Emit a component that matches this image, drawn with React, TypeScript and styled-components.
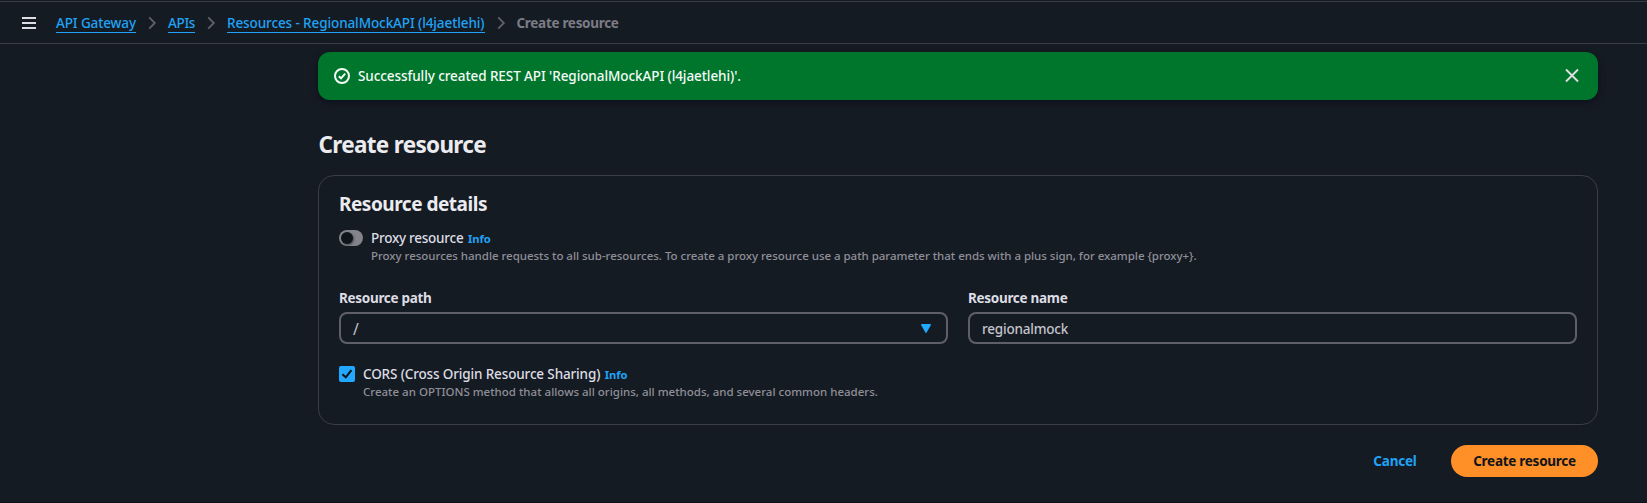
import React from 'react';
import styled, { createGlobalStyle } from 'styled-components';

const color = {
  bg: '#151b23',
  divider: '#3a3c46',
  border: '#5f5f69',
  link: '#20a3f6',
  heading: '#ebebf0',
  text: '#dddde3',
  input: '#c4c4cb',
  muted: '#8f8f98',
  success: '#00762d',
  primary: '#ff8f27',
};

const GlobalStyle = createGlobalStyle`
  * { box-sizing: border-box; }
  body {
    margin: 0;
    background: ${color.bg};
    color: ${color.text};
    font: 500 13.5px/20px "Noto Sans", "Open Sans", sans-serif;
    white-space: nowrap;
    overflow: hidden;
  }
`;

const Page = styled.div`
  height: 503px;
  padding-top: 1px;
  border-bottom: 1px solid #0e121a;
`;

const Header = styled.header`
  display: flex;
  align-items: flex-start;
  height: 43px;
  padding: 11px 22px 0;
  border-top: 1px solid ${color.divider};
  border-bottom: 1px solid ${color.divider};
`;

const MenuButton = styled.button`
  display: flex;
  flex-direction: column;
  gap: 3px;
  width: 14px;
  margin: 4px 20px 0 0;
  padding: 0;
  border: 0;
  background: none;
`;

const MenuBar = styled.span`
  height: 2px;
  background: ${color.text};
`;

const Breadcrumbs = styled.nav`
  display: flex;
  align-items: flex-start;
`;

const Crumb = styled.a<{ $width: number; $tracking: number }>`
  width: ${(p) => p.$width}px;
  height: 20px;
  color: ${color.link};
  border-bottom: 1px solid ${color.link};
  letter-spacing: ${(p) => p.$tracking}px;
`;

const CurrentCrumb = styled.span`
  color: #7c7c86;
  font-weight: 700;
  letter-spacing: -0.3px;
`;

const ChevronIcon = styled.svg`
  width: 16px;
  height: 16px;
  margin: 2px 8px 0;
  fill: none;
  stroke: #5f606a;
  stroke-width: 1.8;
`;

const Main = styled.main`
  width: 1280px;
  margin: 8px 0 0 318px;
`;

const Flashbar = styled.div`
  display: flex;
  align-items: center;
  gap: 8px;
  height: 48px;
  padding: 0 18px 0 16px;
  border-radius: 12px;
  background: ${color.success};
  color: #f5fbf7;
  letter-spacing: -0.08px;
  box-shadow: 0 3px 6px 1px rgba(0, 7, 22, 0.35);
`;

const FlashIcon = styled.svg`
  width: 16px;
  height: 16px;
  fill: none;
  stroke: #f5fbf7;
  stroke-width: 2;
`;

const DismissButton = styled.button`
  display: flex;
  margin-left: auto;
  padding: 0;
  border: 0;
  background: none;
`;

const CloseIcon = styled.svg`
  width: 16px;
  height: 16px;
  fill: none;
  stroke: ${color.text};
  stroke-width: 1.9;
`;

const PageTitle = styled.h1`
  margin: 30px 0 15px;
  padding-left: 0.5px;
  color: ${color.heading};
  font-size: 22.5px;
  font-weight: 700;
  line-height: 30px;
  letter-spacing: -0.68px;
`;

const Container = styled.section`
  height: 250px;
  padding: 16px 20px 24px;
  border: 1px solid ${color.divider};
  border-radius: 16px;
`;

const SectionTitle = styled.h2`
  margin: 0 0 12px;
  color: ${color.heading};
  font-size: 19px;
  font-weight: 700;
  line-height: 24px;
  letter-spacing: -0.48px;
`;

const Option = styled.div`
  display: flex;
  align-items: flex-start;
  gap: 8px;
`;

const Toggle = styled.span`
  width: 24px;
  height: 16px;
  margin-top: 2px;
  padding: 2px;
  border-radius: 8px;
  background: #83838c;
`;

const ToggleHandle = styled.span`
  display: block;
  width: 12px;
  height: 12px;
  border-radius: 50%;
  background: #0f141a;
  box-shadow: 1px 1px 2px rgba(0, 7, 22, 0.5);
`;

const Checkbox = styled.span`
  width: 16px;
  height: 16px;
  margin-top: 2px;
  border-radius: 2px;
  background: #22a8ff;
`;

const CheckIcon = styled.svg`
  display: block;
  width: 16px;
  height: 16px;
  fill: none;
  stroke: #0f141a;
  stroke-width: 2.1;
`;

const OptionLabel = styled.div<{ $tracking: number }>`
  display: flex;
  gap: 4.5px;
  height: 20px;
  letter-spacing: ${(p) => p.$tracking}px;
`;

const InfoLink = styled.a`
  color: ${color.link};
  font-size: 11.2px;
  font-weight: 700;
  line-height: 21px;
  letter-spacing: -0.05px;
`;

const Description = styled.div<{ $tracking: number }>`
  color: ${color.muted};
  font-size: 11.5px;
  line-height: 16px;
  letter-spacing: ${(p) => p.$tracking}px;
`;

const FieldGrid = styled.div`
  display: grid;
  grid-template-columns: 1fr 1fr;
  gap: 20px;
  margin: 24px 0 20px;
`;

const FieldLabel = styled.div`
  margin-bottom: 4px;
  font-weight: 700;
  letter-spacing: -0.3px;
`;

const Control = styled.div`
  display: flex;
  align-items: center;
  justify-content: space-between;
  height: 32px;
  padding: 0 15px 0 12px;
  border: 2px solid ${color.border};
  border-radius: 8px;
  color: ${color.input};
  letter-spacing: -0.2px;
`;

const ControlValue = styled.span<{ $path?: boolean }>`
  padding-top: 1px;
  font-size: ${(p) => (p.$path ? 15.5 : 13.5)}px;
  font-weight: ${(p) => (p.$path ? 400 : 500)};
`;

const CaretIcon = styled.svg`
  width: 10px;
  height: 9px;
  fill: #22a8ff;
  stroke: #22a8ff;
  stroke-width: 1.4;
  stroke-linejoin: round;
`;

const Actions = styled.footer`
  display: flex;
  justify-content: flex-end;
  gap: 12px;
  margin-top: 20px;
`;

const Button = styled.button<{ $primary?: boolean }>`
  width: ${(p) => (p.$primary ? 147 : 88)}px;
  height: 32px;
  padding: 0;
  border: 0;
  border-radius: 16px;
  background: ${(p) => (p.$primary ? color.primary : 'transparent')};
  color: ${(p) => (p.$primary ? '#0f141a' : color.link)};
  font: inherit;
  font-weight: 700;
  letter-spacing: ${(p) => (p.$primary ? -0.27 : -0.2)}px;
`;

const Chevron = () => (
  <ChevronIcon viewBox="0 0 16 16">
    <path d="M5.2 2.4 10.8 8 5.2 13.6" />
  </ChevronIcon>
);

export default function App() {
  return (
    <Page>
      <GlobalStyle />
      <Header>
        <MenuButton aria-label="Open navigation">
          <MenuBar />
          <MenuBar />
          <MenuBar />
        </MenuButton>
        <Breadcrumbs>
          <Crumb $width={80} $tracking={-0.12}>API Gateway</Crumb>
          <Chevron />
          <Crumb $width={27} $tracking={-0.35}>APIs</Crumb>
          <Chevron />
          <Crumb $width={257.5} $tracking={-0.1}>Resources - RegionalMockAPI (l4jaetlehi)</Crumb>
          <Chevron />
          <CurrentCrumb>Create resource</CurrentCrumb>
        </Breadcrumbs>
      </Header>
      <Main>
        <Flashbar>
          <FlashIcon viewBox="0 0 16 16">
            <circle cx="8" cy="8" r="7" />
            <path d="M4.8 8.2 7 10.3 11.2 5.6" />
          </FlashIcon>
          <span>Successfully created REST API 'RegionalMockAPI (l4jaetlehi)'.</span>
          <DismissButton aria-label="Dismiss">
            <CloseIcon viewBox="0 0 16 16">
              <path d="M2 1.5 14 13.5M14 1.5 2 13.5" />
            </CloseIcon>
          </DismissButton>
        </Flashbar>
        <PageTitle>Create resource</PageTitle>
        <Container>
          <SectionTitle>Resource details</SectionTitle>
          <Option>
            <Toggle>
              <ToggleHandle />
            </Toggle>
            <div>
              <OptionLabel $tracking={-0.25}>
                Proxy resource<InfoLink>Info</InfoLink>
              </OptionLabel>
              <Description $tracking={-0.026}>
                Proxy resources handle requests to all sub-resources. To create a proxy resource use a path parameter
                that ends with a plus sign, for example {'{proxy+}'}.
              </Description>
            </div>
          </Option>
          <FieldGrid>
            <div>
              <FieldLabel>Resource path</FieldLabel>
              <Control>
                <ControlValue $path>/</ControlValue>
                <CaretIcon viewBox="0 0 10 9">
                  <path d="M.8.8h8.4L5 8.2z" />
                </CaretIcon>
              </Control>
            </div>
            <div>
              <FieldLabel>Resource name</FieldLabel>
              <Control>
                <ControlValue>regionalmock</ControlValue>
              </Control>
            </div>
          </FieldGrid>
          <Option>
            <Checkbox>
              <CheckIcon viewBox="0 0 16 16">
                <path d="M3.4 8.2 6.8 11.3 12.4 4.2" />
              </CheckIcon>
            </Checkbox>
            <div>
              <OptionLabel $tracking={-0.14}>
                CORS (Cross Origin Resource Sharing)<InfoLink>Info</InfoLink>
              </OptionLabel>
              <Description $tracking={0}>
                Create an OPTIONS method that allows all origins, all methods, and several common headers.
              </Description>
            </div>
          </Option>
        </Container>
        <Actions>
          <Button>Cancel</Button>
          <Button $primary>Create resource</Button>
        </Actions>
      </Main>
    </Page>
  );
}
